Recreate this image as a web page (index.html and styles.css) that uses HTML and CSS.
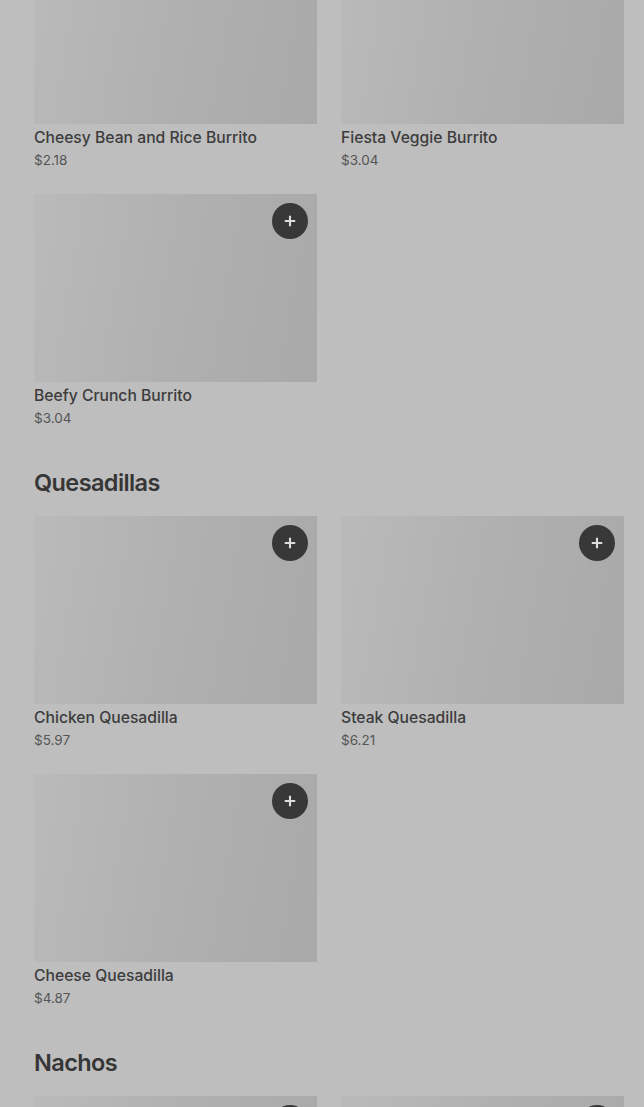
FILE: index.html
```html
<!DOCTYPE html>
<html lang="en">
<head>
    <meta charset="UTF-8">
    <meta name="viewport" content="width=device-width, initial-scale=1.0">
    <title>Menu</title>
    <link rel="stylesheet" href="styles.css">
</head>
<body>
    <div class="menu">
        <section class="category category-scrolled">
            <div class="item-grid">
                <div class="item">
                    <div class="item-image"></div>
                    <div class="item-name">Cheesy Bean and Rice Burrito</div>
                    <div class="item-price">$2.18</div>
                </div>
                <div class="item">
                    <div class="item-image"></div>
                    <div class="item-name">Fiesta Veggie Burrito</div>
                    <div class="item-price">$3.04</div>
                </div>
                <div class="item">
                    <div class="item-image">
                        <button class="add-btn" aria-label="Add">
                            <svg viewBox="0 0 16 16" width="16" height="16"><path d="M8 2v12M2 8h12" stroke="currentColor" stroke-width="2.4"/></svg>
                        </button>
                    </div>
                    <div class="item-name">Beefy Crunch Burrito</div>
                    <div class="item-price">$3.04</div>
                </div>
            </div>
        </section>

        <section class="category">
            <h2 class="category-title">Quesadillas</h2>
            <div class="item-grid">
                <div class="item">
                    <div class="item-image">
                        <button class="add-btn" aria-label="Add">
                            <svg viewBox="0 0 16 16" width="16" height="16"><path d="M8 2v12M2 8h12" stroke="currentColor" stroke-width="2.4"/></svg>
                        </button>
                    </div>
                    <div class="item-name">Chicken Quesadilla</div>
                    <div class="item-price">$5.97</div>
                </div>
                <div class="item">
                    <div class="item-image">
                        <button class="add-btn" aria-label="Add">
                            <svg viewBox="0 0 16 16" width="16" height="16"><path d="M8 2v12M2 8h12" stroke="currentColor" stroke-width="2.4"/></svg>
                        </button>
                    </div>
                    <div class="item-name">Steak Quesadilla</div>
                    <div class="item-price">$6.21</div>
                </div>
                <div class="item">
                    <div class="item-image">
                        <button class="add-btn" aria-label="Add">
                            <svg viewBox="0 0 16 16" width="16" height="16"><path d="M8 2v12M2 8h12" stroke="currentColor" stroke-width="2.4"/></svg>
                        </button>
                    </div>
                    <div class="item-name">Cheese Quesadilla</div>
                    <div class="item-price">$4.87</div>
                </div>
            </div>
        </section>

        <section class="category">
            <h2 class="category-title">Nachos</h2>
            <div class="item-grid">
                <div class="item">
                    <div class="item-image">
                        <button class="add-btn" aria-label="Add">
                            <svg viewBox="0 0 16 16" width="16" height="16"><path d="M8 2v12M2 8h12" stroke="currentColor" stroke-width="2.4"/></svg>
                        </button>
                    </div>
                </div>
                <div class="item">
                    <div class="item-image">
                        <button class="add-btn" aria-label="Add">
                            <svg viewBox="0 0 16 16" width="16" height="16"><path d="M8 2v12M2 8h12" stroke="currentColor" stroke-width="2.4"/></svg>
                        </button>
                    </div>
                </div>
            </div>
        </section>
    </div>
</body>
</html>
```

FILE: styles.css
```css
body {
    margin: 0;
    padding: 0;
    background-color: #bebebe;
    font-family: Inter, "Noto Sans", sans-serif;
    color: #3c3c3c;
    overflow: hidden;
}

.menu {
    padding: 0 20px 0 34px;
}

/* the page is scrolled, first row is cut off at the top */
.category-scrolled {
    margin-top: -64px;
}

.category {
    padding-bottom: 15px;
}

.category-title {
    margin: 24px 0 17px 0;
    font-size: 23.5px;
    line-height: 32px;
    font-weight: 600;
    letter-spacing: -0.6px;
    color: #363636;
}

.item-grid {
    display: grid;
    grid-template-columns: 1fr 1fr;
    column-gap: 24px;
    row-gap: 24px;
}

.item-image {
    position: relative;
    height: 188px;
    background: linear-gradient(100deg, #bababa 0%, #b0b0b0 50%, #a9a9a9 100%);
}

.item-name {
    margin-top: 3px;
    font-size: 15.7px;
    line-height: 21px;
    font-weight: 500;
    color: #3c3c3c;
}

.item-price {
    margin-top: 2px;
    font-size: 13.5px;
    line-height: 20px;
    color: #555555;
}

.add-btn {
    position: absolute;
    top: 9px;
    right: 9px;
    width: 36px;
    height: 36px;
    border: none;
    border-radius: 50%;
    background-color: #383838;
    color: #dcdcdc;
    display: flex;
    align-items: center;
    justify-content: center;
    padding: 0;
    cursor: pointer;
}

.add-btn svg {
    width: 14px;
    height: 14px;
}
```
